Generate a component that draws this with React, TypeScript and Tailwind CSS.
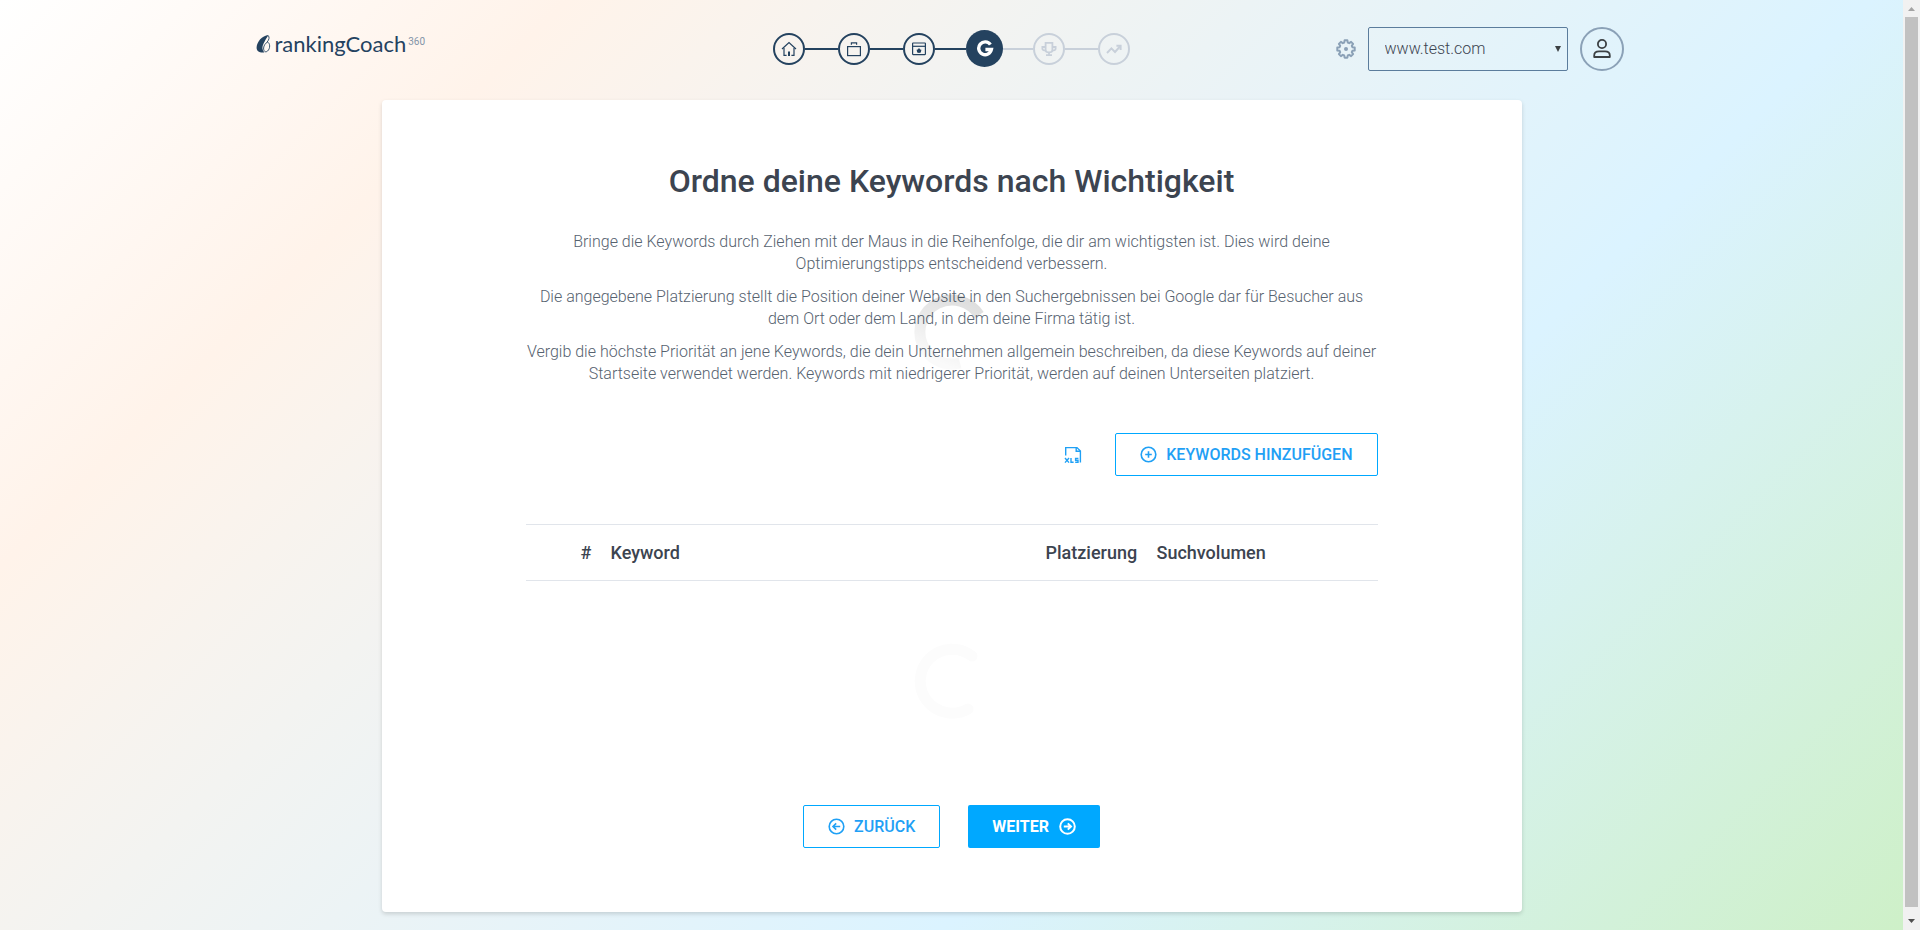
import React from 'react';

type StepState = 'done' | 'current' | 'upcoming';

function HomeIcon() {
  return (
    <svg width="16" height="16" viewBox="0 0 16 16" fill="none" stroke="currentColor" strokeWidth="1.2" aria-hidden="true">
      <path d="M1 8 L8 1.6 L15 8" />
      <path d="M3 7 V14.4 H5.6 M13 7 V14.4 H10.4" />
      <path d="M7 14.9 V10.5 H9 V14.9 Z" fill="currentColor" stroke="none" />
    </svg>
  );
}

function BriefcaseIcon() {
  return (
    <svg width="16" height="16" viewBox="0 0 16 16" fill="none" stroke="currentColor" strokeWidth="1.2" aria-hidden="true">
      <rect x="1.6" y="5.6" width="12.8" height="9" />
      <path d="M5.4 3.8 V1.9 H10.6 V3.8" />
    </svg>
  );
}

function BrowserIcon() {
  return (
    <svg width="16" height="16" viewBox="0 0 16 16" fill="none" stroke="currentColor" strokeWidth="1.2" aria-hidden="true">
      <rect x="1.6" y="2" width="12.8" height="11.6" rx="0.5" />
      <path d="M1.6 5.3 H14.4" />
      <path d="M8 7 L9.2 8.4 L10.4 8.8 L9.8 11.4 L8 11.9 L6.2 11.4 L5.6 8.8 L6.8 8.4 Z" fill="currentColor" stroke="none" />
    </svg>
  );
}

function SearchEngineIcon() {
  return (
    <svg width="18" height="18" viewBox="0 0 18 18" fill="none" stroke="currentColor" strokeWidth="3.4" aria-hidden="true">
      <path d="M14.4 4.6 A6.4 6.4 0 1 0 15.4 9.5 H9.4" />
    </svg>
  );
}

function TrophyIcon() {
  return (
    <svg width="16" height="16" viewBox="0 0 16 16" fill="none" stroke="currentColor" strokeWidth="1.8" aria-hidden="true">
      <path d="M4.6 1.8 H11.4 V9 Q11.4 11.4 8 11.4 Q4.6 11.4 4.6 9 Z" />
      <path d="M4.6 6 H1.4 V8 Q1.6 9.6 4.8 9.6 M11.4 6 H14.6 V8 Q14.4 9.6 11.2 9.6" />
      <path d="M8 11.4 V14 M5 14.2 H11" />
    </svg>
  );
}

function TrendIcon() {
  return (
    <svg width="16" height="16" viewBox="0 0 16 16" fill="none" stroke="currentColor" strokeWidth="2" aria-hidden="true">
      <path d="M1 12 L5.4 7.4 L9 11 L14.4 5" />
      <path d="M10.4 4.7 H14.6 V9" />
    </svg>
  );
}

const steps: { label: string; state: StepState; icon: React.ReactNode }[] = [
  { label: 'Start', state: 'done', icon: <HomeIcon /> },
  { label: 'Firma', state: 'done', icon: <BriefcaseIcon /> },
  { label: 'Website', state: 'done', icon: <BrowserIcon /> },
  { label: 'Keywords', state: 'current', icon: <SearchEngineIcon /> },
  { label: 'Wettbewerber', state: 'upcoming', icon: <TrophyIcon /> },
  { label: 'Ergebnisse', state: 'upcoming', icon: <TrendIcon /> },
];

const stepStyle: Record<StepState, string> = {
  done: 'size-8 border-2 border-[#24425f] text-[#24425f]',
  current: 'size-[37px] bg-[#24425f] text-white',
  upcoming: 'size-8 border-2 border-[#c8d0da] text-[#c8d0da]',
};

function Logo() {
  return (
    <a href="#" className="flex items-center text-[#24425f]">
      <svg width="15" height="20" viewBox="0 0 15 20" aria-hidden="true">
        <path d="M12.6 1 C5.8 1.6 1 8 0.6 13.2 C0.4 17 3.4 19 8.4 18.4 C6 15.8 5.8 12.6 7.6 9.4 C9 6.8 10.4 4 12.6 1 Z" fill="currentColor" />
        <path d="M12.2 1.6 C13.8 3.2 13 5.8 11.2 8 C14.4 8.8 14.4 14.6 11.6 17 C9.6 18.8 7.4 17.4 7.6 14 C7.8 11 9.8 9.4 11.2 8" fill="none" stroke="currentColor" strokeWidth="0.9" />
      </svg>
      <span className="ml-1 font-[Lato,sans-serif] text-[22px] leading-7">rankingCoach</span>
      <span className="mb-1 ml-0.5 text-[10px] leading-3 text-[#8294a8]">360</span>
    </a>
  );
}

function Stepper() {
  return (
    <ol className="flex h-[37px] items-center">
      {steps.map((step, i) => (
        <li key={step.label} className="flex items-center">
          {i > 0 && (
            <span className={`h-0.5 ${step.state === 'upcoming' ? 'bg-[#c8d0da]' : 'bg-[#24425f]'} ${step.state === 'current' ? 'w-[31px]' : steps[i - 1].state === 'current' ? 'w-[30px]' : 'w-[33px]'}`} />
          )}
          <a href="#" aria-label={step.label} className={`flex items-center justify-center rounded-full ${stepStyle[step.state]}`}>
            {step.icon}
          </a>
        </li>
      ))}
    </ol>
  );
}

function GearIcon() {
  return (
    <svg width="20" height="20" viewBox="0 0 20 20" fill="none" stroke="currentColor" strokeWidth="2" strokeLinejoin="round" aria-hidden="true">
      <path d="M8.6 1.3 H11.4 L11.8 3.6 L13.2 4.2 L15.1 2.9 L17.1 4.9 L15.8 6.8 L16.4 8.2 L18.7 8.6 V11.4 L16.4 11.8 L15.8 13.2 L17.1 15.1 L15.1 17.1 L13.2 15.8 L11.8 16.4 L11.4 18.7 H8.6 L8.2 16.4 L6.8 15.8 L4.9 17.1 L2.9 15.1 L4.2 13.2 L3.6 11.8 L1.3 11.4 V8.6 L3.6 8.2 L4.2 6.8 L2.9 4.9 L4.9 2.9 L6.8 4.2 L8.2 3.6 Z" />
      <circle cx="10" cy="10" r="2" fill="currentColor" stroke="none" />
    </svg>
  );
}

function AccountTools() {
  return (
    <div className="flex items-center justify-end pr-6">
      <button type="button" aria-label="Einstellungen" className="mr-3 text-[#8ba1b7]">
        <GearIcon />
      </button>
      <div className="relative">
        <select aria-label="Website" className="h-[44px] w-[200px] appearance-none rounded-xs border border-[#5b7c9c] pl-4 text-base font-light text-[#3c4450]">
          <option>www.test.com</option>
        </select>
        <svg width="6" height="6" viewBox="0 0 6 6" className="pointer-events-none absolute top-[19px] right-[7px]" aria-hidden="true">
          <path d="M0 0 H6 L3 6 Z" fill="#3c4043" />
        </svg>
      </div>
      <button type="button" aria-label="Konto" className="ml-3 flex size-[44px] items-center justify-center rounded-full border-2 border-[#8ba1b7] text-[#3c4043]">
        <svg width="18" height="20" viewBox="0 0 18 20" fill="none" stroke="currentColor" strokeWidth="1.8" strokeLinejoin="round" aria-hidden="true">
          <circle cx="9" cy="5" r="4.1" />
          <path d="M1.2 18 V16.4 Q1.2 12.4 6 12.4 H12 Q16.8 12.4 16.8 16.4 V18 Z" />
        </svg>
      </button>
    </div>
  );
}

function CircleIcon({ kind }: { kind: 'plus' | 'left' | 'right' }) {
  const marks = {
    plus: 'M8.5 5.2 V11.8 M5.2 8.5 H11.8',
    left: 'M12.2 8.5 H5.2 M8.2 5.4 L5 8.5 L8.2 11.6',
    right: 'M4.8 8.5 H11.8 M8.8 5.4 L12 8.5 L8.8 11.6',
  };
  return (
    <svg width="17" height="17" viewBox="0 0 17 17" fill="none" stroke="currentColor" strokeWidth={kind === 'right' ? 2 : 1.6} aria-hidden="true">
      <circle cx="8.5" cy="8.5" r="7.3" />
      <path d={marks[kind]} />
    </svg>
  );
}

function XlsIcon() {
  return (
    <svg width="18" height="18" viewBox="0 0 18 18" fill="none" stroke="currentColor" strokeWidth="1.4" aria-hidden="true">
      <path d="M1.7 9.6 V1.6 H13 L16.4 5 V16.6" />
      <path d="M12.2 1.6 V5.2 H16.4" />
      <path d="M1 12 L5 16.6 M5 12 L1 16.6 M7 12 V16.2 H9.6 M14.4 12.4 H11.6 V14.2 H14 V16.2 H11.2" />
    </svg>
  );
}

function LoadingRing({ faint = false }: { faint?: boolean }) {
  return (
    <svg width="76" height="76" viewBox="0 0 76 76" fill="none" aria-hidden="true">
      <defs>
        <linearGradient id="ring-fade" x1="0.8" y1="0" x2="0.4" y2="1">
          <stop offset="0" stopColor="#000" stopOpacity="0.13" />
          <stop offset="0.5" stopColor="#000" stopOpacity="0.08" />
          <stop offset="1" stopColor="#000" stopOpacity="0.02" />
        </linearGradient>
      </defs>
      {faint ? (
        <path d="M58 13 A32 32 0 1 0 54 66" stroke="#fcfcfc" strokeWidth="11" strokeLinecap="round" />
      ) : (
        <path d="M65 21 A32 32 0 1 0 46 69" stroke="url(#ring-fade)" strokeWidth="11" />
      )}
    </svg>
  );
}

const outlineButton =
  'flex h-[43px] items-center gap-[9px] rounded-xs border border-[#00a8ff] px-6 text-base font-medium text-[#1fa0f5] uppercase';

function KeywordCard() {
  return (
    <main className="mx-auto w-full max-w-[1140px] rounded bg-white px-36 pt-[60px] pb-16 shadow-[0_2px_4px_rgba(0,0,0,0.15)]">
      <h1 className="text-center text-[32px] leading-[42px] font-medium text-[#3c4450]">Ordne deine Keywords nach Wichtigkeit</h1>
      <section className="relative mt-[29px] space-y-[11px] text-center text-base leading-[22px] font-light text-[#56626f]">
        <p>
          Bringe die Keywords durch Ziehen mit der Maus in die Reihenfolge, die dir am wichtigsten ist. Dies wird deine
          Optimierungstipps entscheidend verbessern.
        </p>
        <p>
          Die angegebene Platzierung stellt die Position deiner Website in den Suchergebnissen bei Google dar für Besucher
          aus dem Ort oder dem Land, in dem deine Firma tätig ist.
        </p>
        <p>
          Vergib die höchste Priorität an jene Keywords, die dein Unternehmen allgemein beschreiben, da diese Keywords auf
          deiner Startseite verwendet werden. Keywords mit niedrigerer Priorität, werden auf deinen Unterseiten platziert.
        </p>
        <div className="pointer-events-none absolute inset-0 flex items-center justify-center pt-12">
          <LoadingRing />
        </div>
      </section>
      <div className="mt-12 flex items-center justify-end gap-[33px]">
        <button type="button" aria-label="XLS exportieren" className="text-[#1fa0f5]">
          <XlsIcon />
        </button>
        <button type="button" className={outlineButton}>
          <CircleIcon kind="plus" />
          Keywords hinzufügen
        </button>
      </div>
      <table className="mt-12 w-full table-fixed border-separate border-spacing-0 border-y border-[#e1e5eb] text-left text-lg text-[#3c4450]">
        <thead>
          <tr className="h-[55px]">
            <td className="w-[45px]" />
            <th scope="col" className="w-[30px] pl-2.5 font-medium">#</th>
            <th scope="col" className="pl-2.5 font-medium">Keyword</th>
            <th scope="col" className="w-[111px] pl-2.5 font-medium">Platzierung</th>
            <th scope="col" className="w-[231px] pl-2.5 font-medium">Suchvolumen</th>
          </tr>
        </thead>
      </table>
      <div className="flex h-56 items-center justify-center pb-6">
        <LoadingRing faint />
      </div>
      <div className="flex justify-center gap-7">
        <button type="button" className={outlineButton}>
          <CircleIcon kind="left" />
          Zurück
        </button>
        <button type="button" className="flex h-[43px] items-center gap-2.5 rounded-xs bg-[#00a8ff] px-6 text-base font-bold text-white uppercase">
          Weiter
          <CircleIcon kind="right" />
        </button>
      </div>
    </main>
  );
}

function ScrollRail() {
  return (
    <div aria-hidden="true" className="sticky top-0 flex h-screen w-[17px] shrink-0 flex-col items-center justify-between bg-[#f1f1f1]">
      <svg width="17" height="17" viewBox="0 0 17 17">
        <path d="M5 11 L8.5 7 L12 11 Z" fill="#a3a3a3" />
      </svg>
      <span className="w-[13px] grow bg-[#c1c1c1]" />
      <svg width="17" height="23" viewBox="0 0 17 23">
        <path d="M5 12 L8.5 16 L12 12 Z" fill="#505050" />
      </svg>
    </div>
  );
}

export default function App() {
  return (
    <div className="flex min-h-screen font-[Roboto,sans-serif]">
      <div className="min-w-0 flex-1 bg-[linear-gradient(135deg,#ffffff_0%,#fff3ea_20%,#dbf3ff_66%,#cef0c8_100%)] pb-4">
        <header className="mx-auto grid h-[100px] max-w-[1392px] grid-cols-[1fr_auto_1fr] items-start">
          <div className="pt-[30px]">
            <Logo />
          </div>
          <div className="pt-[30px]">
            <Stepper />
          </div>
          <div className="pt-[27px]">
            <AccountTools />
          </div>
        </header>
        <KeywordCard />
      </div>
      <ScrollRail />
    </div>
  );
}
